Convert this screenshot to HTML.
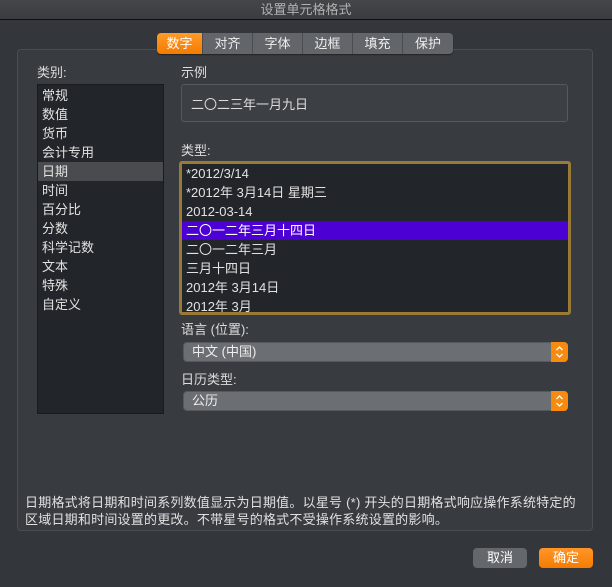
<!DOCTYPE html>
<html><head><meta charset="utf-8"><style>
*{margin:0;padding:0;box-sizing:border-box}
body{width:612px;height:587px;background:#33363b;font-family:"Liberation Sans","Noto Sans CJK SC",sans-serif;font-size:13px;color:#dcdcdc;position:relative;overflow:hidden}
.a{position:absolute}
.title{left:0;top:0;width:612px;height:20px;background:linear-gradient(#444649,#3a3c3f);border-bottom:1px solid #0e0e0e;text-align:center;line-height:19px;color:#b0b0b0;font-size:13px}
.group{left:17px;top:49px;width:576px;height:482px;border:1px solid #4a4d52;border-radius:4px;background:#383b40}
.tabs{left:157px;top:33px;height:21px;display:flex;border-radius:4px;overflow:hidden;box-shadow:0 1px 1px #222}
.tabs div{width:50px;height:21px;background:#626569;border-right:1px solid #4a4c50;text-align:center;line-height:21px;font-size:13px;color:#eee}
.tabs div.on{background:linear-gradient(#ff9a2a,#f57b00);width:46px;color:#fff}
.tabs div:last-child{border:none}
.list{background:#222529;border:1px solid #191b1e}
.row{height:19px;line-height:19px;padding-left:4px;font-size:13px;color:#e2e2e2;white-space:nowrap}
.sel{height:20px;background:#6b6e72;border-radius:4px;border:1px solid #55585c}
.sel .t{position:absolute;left:8px;top:0;line-height:18px;font-size:13px;color:#eee}
.sel .o{position:absolute;right:-1px;top:-1px;width:17px;height:20px;background:#f88a10;border-radius:0 4px 4px 0}
.btn{height:20px;border-radius:4px;text-align:center;line-height:20px;font-size:13px;color:#fff}
</style></head><body>
<div class="a title">设置单元格格式</div>
<div class="a group"></div>
<div class="a tabs"><div class="on">数字</div><div>对齐</div><div>字体</div><div>边框</div><div>填充</div><div>保护</div></div>
<div class="a" style="left:37px;top:62px">类别:</div>
<div class="a list" style="left:37px;top:84px;width:127px;height:330px;padding-top:1px">
<div class="row">常规</div><div class="row">数值</div><div class="row">货币</div><div class="row">会计专用</div>
<div class="row" style="background:#4a4b4e">日期</div><div class="row">时间</div><div class="row">百分比</div><div class="row">分数</div><div class="row">科学记数</div><div class="row">文本</div><div class="row">特殊</div><div class="row">自定义</div></div>
<div class="a" style="left:181px;top:62px">示例</div>
<div class="a" style="left:181px;top:84px;width:387px;height:38px;background:#3c3f44;border:1px solid #56595e;border-radius:3px;padding:9px 0 0 9px;font-size:13px">二〇二三年一月九日</div>
<div class="a" style="left:181px;top:140px">类型:</div>
<div class="a list" style="left:179px;top:161px;width:392px;height:154px;border:3px solid #9a7a37;border-radius:3px;overflow:hidden">
<div class="row">*2012/3/14</div><div class="row">*2012年 3月14日 星期三</div><div class="row">2012-03-14</div>
<div class="row" style="background:#4d00d4;color:#fff">二〇一二年三月十四日</div><div class="row">二〇一二年三月</div><div class="row">三月十四日</div><div class="row">2012年 3月14日</div><div class="row">2012年 3月</div></div>
<div class="a" style="left:181px;top:319px">语言 (位置):</div>
<div class="a sel" style="left:183px;top:342px;width:385px"><span class="t">中文 (中国)</span><span class="o"><svg width="17" height="20"><path d="M5.5 8 L8.5 5 L11.5 8 M5.5 12 L8.5 15 L11.5 12" stroke="#fff" stroke-width="1.3" fill="none"/></svg></span></div>
<div class="a" style="left:181px;top:369px">日历类型:</div>
<div class="a sel" style="left:183px;top:391px;width:385px"><span class="t">公历</span><span class="o"><svg width="17" height="20"><path d="M5.5 8 L8.5 5 L11.5 8 M5.5 12 L8.5 15 L11.5 12" stroke="#fff" stroke-width="1.3" fill="none"/></svg></span></div>
<div class="a" style="left:25px;top:494px;width:580px;line-height:17px;font-size:13px;letter-spacing:0.22px;color:#e0e0e0;white-space:nowrap">日期格式将日期和时间系列数值显示为日期值。以星号 (*) 开头的日期格式响应操作系统特定的<br>区域日期和时间设置的更改。不带星号的格式不受操作系统设置的影响。</div>
<div class="a btn" style="left:473px;top:548px;width:54px;background:#64676b">取消</div>
<div class="a btn" style="left:539px;top:548px;width:54px;background:linear-gradient(#ff962a,#f67c00)">确定</div>
</body></html>
